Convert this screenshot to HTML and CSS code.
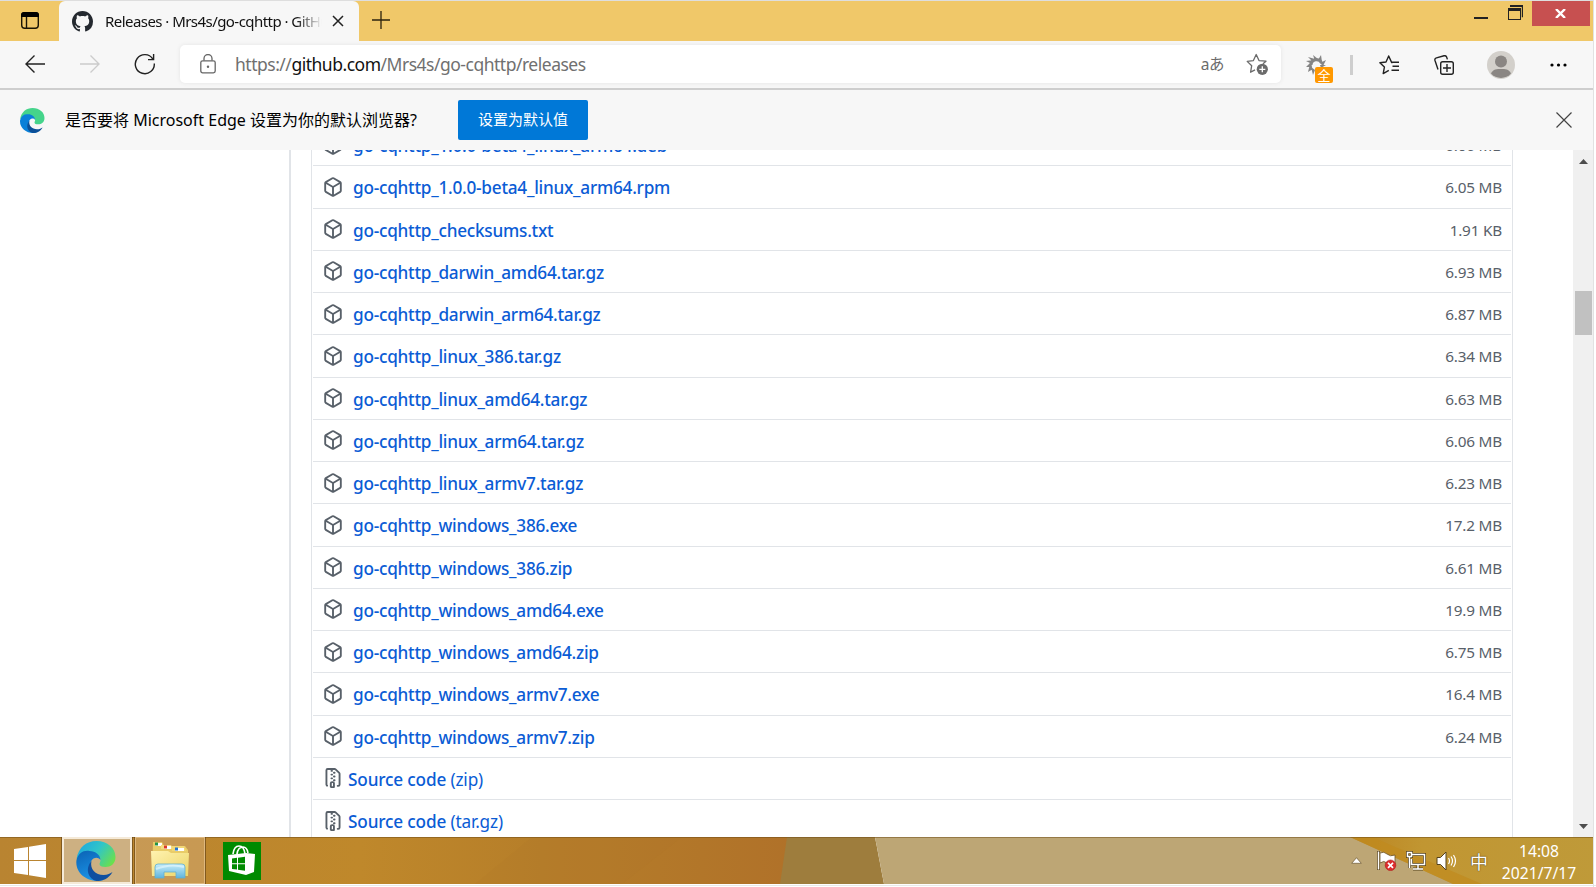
FILE: index.html
```html
<!DOCTYPE html>
<html lang="zh-CN">
<head>
<meta charset="utf-8">
<title>Releases · Mrs4s/go-cqhttp · GitHub</title>
<link rel="stylesheet" href="styles.css">
</head>
<body>
<svg class="defs" aria-hidden="true">
  <symbol id="package" viewBox="0 0 16 16"><path fill-rule="evenodd" d="M8.878.392a1.75 1.75 0 00-1.756 0l-5.25 3.045A1.75 1.75 0 001 4.951v6.098c0 .624.332 1.2.872 1.514l5.25 3.045a1.75 1.75 0 001.756 0l5.25-3.045c.54-.313.872-.89.872-1.514V4.951c0-.624-.332-1.2-.872-1.514L8.878.392zM7.875 1.69a.25.25 0 01.25 0l4.63 2.685L8 7.133 3.245 4.375l4.63-2.685zM2.5 5.677v5.372c0 .09.047.171.125.216l4.625 2.683V8.432L2.5 5.677zm6.25 8.271l4.625-2.683a.25.25 0 00.125-.216V5.677L8.75 8.432v5.516z"/></symbol>
  <symbol id="zip" viewBox="0 0 16 16"><path fill-rule="evenodd" d="M3.5 1.75a.25.25 0 01.25-.25h3a.75.75 0 000 1.5h.5a.75.75 0 000-1.5h2.086a.25.25 0 01.177.073l2.914 2.914a.25.25 0 01.073.177v8.586a.25.25 0 01-.25.25h-.5a.75.75 0 000 1.5h.5A1.75 1.75 0 0014 13.25V4.664c0-.464-.184-.909-.513-1.237L10.573.513A1.75 1.75 0 009.336 0H3.75A1.75 1.75 0 002 1.75v11.5c0 .649.353 1.214.874 1.515a.75.75 0 10.752-1.298.25.25 0 01-.126-.217V1.75zM8.75 3a.75.75 0 000 1.5h.5a.75.75 0 000-1.5h-.5zM6 5.25a.75.75 0 01.75-.75h.5a.75.75 0 010 1.5h-.5A.75.75 0 016 5.25zm2 1.5A.75.75 0 018.75 6h.5a.75.75 0 010 1.5h-.5A.75.75 0 018 6.75zm-1.25.75a.75.75 0 000 1.5h.5a.75.75 0 000-1.5h-.5zM8 9.75A.75.75 0 018.75 9h.5a.75.75 0 010 1.5h-.5A.75.75 0 018 9.75zm-.75.75a1.75 1.75 0 00-1.75 1.75v3c0 .414.336.75.75.75h2.5a.75.75 0 00.75-.75v-3a1.75 1.75 0 00-1.75-1.75h-.5zM7 12.25a.25.25 0 01.25-.25h.5a.25.25 0 01.25.25v2.25H7v-2.25z"/></symbol>
  <linearGradient id="edge-green" x1="0" y1=".2" x2="1" y2=".7"><stop offset="0" stop-color="#1ca8e0"/><stop offset=".5" stop-color="#30c5c8"/><stop offset="1" stop-color="#6be04c"/></linearGradient>
  <linearGradient id="edge-blue" x1="0" y1="0" x2=".4" y2="1"><stop offset="0" stop-color="#0b62b4"/><stop offset="1" stop-color="#1b93e6"/></linearGradient>
  <linearGradient id="paper" x1="0" y1="0" x2="1" y2="1"><stop offset="0" stop-color="#fff3b0"/><stop offset="1" stop-color="#ecd468"/></linearGradient>
  <linearGradient id="tray-blue" x1="0" y1="0" x2="0" y2="1"><stop offset="0" stop-color="#c7edf9"/><stop offset="1" stop-color="#5fb4dd"/></linearGradient>
</svg>
<div class="window">
  <header class="titlebar">
    <div class="tab-actions"><svg width="20" height="20" viewBox="0 0 20 20"><rect x="1.7" y="1.7" width="16.6" height="15.6" rx="3" fill="none" stroke="#1a1505" stroke-width="1.4"/><path d="M1 6V4a3 3 0 0 1 3-3h12a3 3 0 0 1 3 3v2z" fill="#000"/><path d="M6.5 6v11.500" stroke="#1a1505" stroke-width="1.4"/></svg></div>
    <div class="tab">
      <svg width="21" height="21" viewBox="0 0 16 16" fill="#24292f"><path d="M8 0C3.580 0 0 3.580 0 8c0 3.540 2.290 6.530 5.470 7.590.4.070.55-.17.55-.38 0-.19-.01-.82-.01-1.490-2.010.37-2.530-.49-2.690-.94-.09-.23-.48-.94-.82-1.130-.28-.15-.68-.52-.01-.53.63-.01 1.080.58 1.230.82.720 1.210 1.870.87 2.330.66.070-.52.28-.87.51-1.070-1.780-.2-3.640-.89-3.640-3.950 0-.87.31-1.590.82-2.150-.08-.2-.36-1.020.08-2.120 0 0 .67-.21 2.200.82.64-.18 1.320-.27 2-.27s1.360.09 2 .27c1.530-1.040 2.200-.82 2.200-.82.44 1.100.16 1.920.08 2.120.51.56.82 1.270.82 2.150 0 3.070-1.870 3.750-3.650 3.950.29.25.54.73.54 1.480 0 1.070-.01 1.930-.01 2.200 0 .21.15.46.55.38A8.013 8.013 0 0 0 16 8c0-4.420-3.580-8-8-8z"/></svg>
      <span class="tab-title">Releases · Mrs4s/go-cqhttp · GitHub</span>
      <svg class="tab-close" width="12" height="12" viewBox="0 0 12 12"><path d="M1 1l10 10M11 1L1 11" stroke="#222" stroke-width="1.5"/></svg>
    </div>
    <svg class="new-tab" width="18" height="18" viewBox="0 0 18 18"><path d="M9 0v18M0 9h18" stroke="#2b230e" stroke-width="1.3"/></svg>
    <div class="captions">
      <svg class="minimize" width="14" height="2"><path d="M0 1h14" stroke="#222" stroke-width="2"/></svg>
      <svg class="restore" width="15" height="15" viewBox="0 0 15 15"><path d="M2.500 1.300h12v11" fill="none" stroke="#222" stroke-width="1.400"/><path d="M2 1h13" stroke="#222" stroke-width="2"/><rect x=".5" y="4" width="12" height="10.500" fill="none" stroke="#222"/><path d="M0 4.500h13" stroke="#222" stroke-width="3"/></svg>
      <div class="close"><svg width="11" height="9" viewBox="0 0 11 9"><path d="M1 0l9 9M10 0L1 9" stroke="#fff" stroke-width="2.400"/></svg></div>
    </div>
  </header>
  <nav class="toolbar">
    <svg class="back" width="20" height="18" viewBox="0 0 20 18"><path d="M20 9H1M9.500 .5L1 9l8.500 8.500" fill="none" stroke="#222" stroke-width="1.400"/></svg>
    <svg class="forward" width="20" height="18" viewBox="0 0 20 18"><path d="M0 9h19M10.500 .5L19 9l-8.500 8.500" fill="none" stroke="#ccc" stroke-width="1.400"/></svg>
    <svg class="reload" width="22" height="22" viewBox="0 0 22 22"><path d="M20.300 10.500A9.500 9.500 0 1 1 18.800 6M19.600 1v5.600H14" fill="none" stroke="#222" stroke-width="1.400"/></svg>
    <div class="address">
      <svg class="lock" width="16" height="20" viewBox="0 0 16 20"><rect x=".8" y="6.800" width="14.400" height="12" rx="1.800" fill="none" stroke="#666" stroke-width="1.300"/><path d="M4 6.500V4.500a4 4 0 0 1 8 0v2" fill="none" stroke="#666" stroke-width="1.300"/><circle cx="8" cy="12.700" r="1.200" fill="#666"/></svg>
      <span class="url">https://<b>github.com</b>/Mrs4s/go-cqhttp/releases</span>
      <span class="translate">aあ</span>
      <svg class="star" width="23" height="23" viewBox="0 0 23 23"><path d="M9 16.900l-4.400 2.300 1.100-6.500L1.200 8.400l6.200-.8L10.200 1.500 13 7.600l7 .6-3 2.600" fill="none" stroke="#6b6b6b" stroke-width="1.300" stroke-linejoin="round"/><circle cx="16.300" cy="16.300" r="5.600" fill="#6b6b6b"/><path d="M16.300 13.300v6M13.300 16.300h6" stroke="#fff" stroke-width="1.300"/></svg>
    </div>
    <div class="extension"><svg width="20" height="20" viewBox="0 0 20 20"><g fill="#858585"><path d="M9 6L7 0l5 4zM12 5l3-5 1 7zM14 8l6-3-3 6zM14 10l6 0-5 3zM7 7L2 2l7 2zM6 9L0 6l8-1zM6 12l-6 0 5-5zM7 14l-5 3 2-8zM9 15l-2 5-2-8z"/></g><path d="M5 10a5.500 5.500 0 0 1 10.500-2" fill="none" stroke="#858585" stroke-width="3"/></svg><span class="badge">全</span></div>
    <i class="divider"></i>
    <svg class="favorites" width="21" height="20" viewBox="0 0 21 20"><path d="M13.500 7.600H12.700L9.700 1 7 7 .9 7.800l4.500 4.300-1.200 6.500 5.600-3.200M12.500 7.200H20M13.500 11.200H20M12.500 15.200H20" fill="none" stroke="#222" stroke-width="1.400" stroke-linejoin="round"/></svg>
    <svg class="collections" width="20" height="20" viewBox="0 0 20 20"><rect x="6.700" y="6.700" width="12.600" height="12.600" rx="2" fill="none" stroke="#222" stroke-width="1.400"/><path d="M13 9v8M9 13h8M4 14.500L1 5.500Q.4 3.500 2.500 2.900L10 .8Q12 .3 12.600 2l.8 2.400" fill="none" stroke="#222" stroke-width="1.400"/></svg>
    <svg class="avatar" width="28" height="28" viewBox="0 0 28 28"><circle cx="14" cy="14" r="14" fill="#d3d0cb"/><circle cx="14" cy="10.500" r="6" fill="#8a8683"/><path d="M4 22.500c2-4.500 6-4.500 10-4.500s8 0 10 4.500a13.500 13.500 0 0 1-20 0z" fill="#8a8683"/></svg>
    <svg class="more" width="17" height="4" viewBox="0 0 17 4"><circle cx="2" cy="2" r="1.600"/><circle cx="8.500" cy="2" r="1.600"/><circle cx="15" cy="2" r="1.600"/></svg>
  </nav>
  <aside class="infobar">
    <svg class="edge-logo" width="26" height="25" viewBox="0 0 40 40"><path d="M1 18C3 6 11 0 21 0c11 0 19 7 19 16 0 7-5 10-10 10-4 0-6-1-6-3 0-1 1-2 1-4 0-3-3-6-8-6C10 13 4 14 1 18z" fill="#45d48b"/><path d="M1 19C3 12 8 9 14 10c6 0 11 4 11 9-4-5-11-1-10 6 1 6 6 11 13 14C14 43-1 33 1 19z" fill="#0a80d8"/><path d="M16 20c-2 8 4 14 12 14 4 0 7-2 9-3-4 7-10 9-16 9-8-2-12-12-5-20z" fill="#0c4f97"/></svg>
    <span class="question">是否要将 Microsoft Edge 设置为你的默认浏览器?</span>
    <button class="set-default">设置为默认值</button>
    <svg class="dismiss" width="16" height="16" viewBox="0 0 16 16"><path d="M.5 .5l15 15M15.500 .5l-15 15" stroke="#444" stroke-width="1.200"/></svg>
  </aside>
  <main class="page">
    <div class="timeline"></div>
    <ul class="assets">
      <li><svg><use href="#package"/></svg><a>go-cqhttp_1.0.0-beta4_linux_arm64.deb</a><small>6.06 MB</small></li>
      <li><svg><use href="#package"/></svg><a>go-cqhttp_1.0.0-beta4_linux_arm64.rpm</a><small>6.05 MB</small></li>
      <li><svg><use href="#package"/></svg><a>go-cqhttp_checksums.txt</a><small>1.91 KB</small></li>
      <li><svg><use href="#package"/></svg><a>go-cqhttp_darwin_amd64.tar.gz</a><small>6.93 MB</small></li>
      <li><svg><use href="#package"/></svg><a>go-cqhttp_darwin_arm64.tar.gz</a><small>6.87 MB</small></li>
      <li><svg><use href="#package"/></svg><a>go-cqhttp_linux_386.tar.gz</a><small>6.34 MB</small></li>
      <li><svg><use href="#package"/></svg><a>go-cqhttp_linux_amd64.tar.gz</a><small>6.63 MB</small></li>
      <li><svg><use href="#package"/></svg><a>go-cqhttp_linux_arm64.tar.gz</a><small>6.06 MB</small></li>
      <li><svg><use href="#package"/></svg><a>go-cqhttp_linux_armv7.tar.gz</a><small>6.23 MB</small></li>
      <li><svg><use href="#package"/></svg><a>go-cqhttp_windows_386.exe</a><small>17.2 MB</small></li>
      <li><svg><use href="#package"/></svg><a>go-cqhttp_windows_386.zip</a><small>6.61 MB</small></li>
      <li><svg><use href="#package"/></svg><a>go-cqhttp_windows_amd64.exe</a><small>19.9 MB</small></li>
      <li><svg><use href="#package"/></svg><a>go-cqhttp_windows_amd64.zip</a><small>6.75 MB</small></li>
      <li><svg><use href="#package"/></svg><a>go-cqhttp_windows_armv7.exe</a><small>16.4 MB</small></li>
      <li><svg><use href="#package"/></svg><a>go-cqhttp_windows_armv7.zip</a><small>6.24 MB</small></li>
      <li class="source"><svg><use href="#zip"/></svg><a>Source code <span>(zip)</span></a></li>
      <li class="source"><svg><use href="#zip"/></svg><a>Source code <span>(tar.gz)</span></a></li>
    </ul>
    <div class="scrollbar">
      <svg class="up" width="9" height="5" viewBox="0 0 9 5"><path d="M4.500 0L9 5H0z"/></svg>
      <div class="thumb"></div>
      <svg class="down" width="9" height="5" viewBox="0 0 9 5"><path d="M0 0h9L4.500 5z"/></svg>
    </div>
  </main>
  <footer class="taskbar">
    <svg class="wallpaper" width="1593" height="47" viewBox="0 0 1593 47" preserveAspectRatio="none">
      <defs><linearGradient id="wood"><stop offset="0" stop-color="#b98431"/><stop offset=".45" stop-color="#bf882b"/><stop offset=".7" stop-color="#b57d29"/><stop offset="1" stop-color="#b07129"/></linearGradient><linearGradient id="gold"><stop offset="0" stop-color="#bb8420"/><stop offset=".3" stop-color="#c19632"/><stop offset="1" stop-color="#bf9a39"/></linearGradient></defs>
      <rect width="800" height="47" fill="url(#wood)"/>
      <path d="M532 0h150l-60 47H475z" fill="#a97229" opacity=".12"/>
      <path d="M787 0h88l9 47H780z" fill="#9e7d3d"/>
      <path d="M875 0h480l115 47H884z" fill="#bda675"/>
      <path d="M1350 0h243v47h-140z" fill="url(#gold)"/>
      <path d="M1350 0h22l110 47h-29z" fill="#c18a1e" opacity=".7"/>
      <path d="M0 .5h1593" stroke="#6d4b18" stroke-opacity=".5"/>
    </svg>
    <svg class="start" width="34" height="34" viewBox="0 0 34 34"><path d="M1 5l14-2v13H1zM16 2.800L33 0v16H16zM1 17h14v14L1 29zM16 17h17v17l-17-2.800z" fill="#fff"/></svg>
    <div class="task active"><svg width="41" height="40" viewBox="0 0 40 40"><path d="M1 18C3 6 11 0 21 0c11 0 19 7 19 16 0 7-5 10-10 10-4 0-6-1-6-3 0-1 1-2 1-4 0-3-3-6-8-6C10 13 4 14 1 18z" fill="url(#edge-green)"/><path d="M1 19C3 12 8 9 14 10c6 0 11 4 11 9-4-5-11-1-10 6 1 6 6 11 13 14C14 43-1 33 1 19z" fill="url(#edge-blue)"/><path d="M16 20c-2 8 4 14 12 14 4 0 7-2 9-3-4 7-10 9-16 9-8-2-12-12-5-20z" fill="#0f4fa0"/></svg></div>
    <div class="task"><svg width="40" height="39" viewBox="0 0 40 39"><path d="M3 1h9l2 4h21l3 4v26H2z" fill="#e9cc68"/><path d="M5 2h7v3H5z" fill="#fff"/><path d="M5 1.500h3v3H5z" fill="#249245"/><path d="M11 4h10l2 4h-12z" fill="#f4dd82"/><path d="M14 5h7v3h-7z" fill="#fff"/><path d="M14 4.500h3v3h-3z" fill="#dd382a"/><path d="M22 5h12l2 5H22z" fill="#f2d777"/><path d="M25 7h9v3h-9z" fill="#fff"/><path d="M25 6.500h3v3h-3z" fill="#2676cf"/><path d="M1 10h17l3 2h18l-1 23H2z" fill="url(#paper)"/><path d="M8 23h24q3 0 3 3v11h-9v-6H14v6H5V26q0-3 3-3z" fill="url(#tray-blue)" stroke="#5faed1" stroke-width=".8"/><path d="M6 28q15-6 28-2" fill="none" stroke="#e5f9ff" stroke-width="2" opacity=".6"/></svg></div>
    <div class="store"><svg width="28" height="31" viewBox="0 0 28 31"><path d="M5 9Q6 1 11 1t6 8M9 9q1-7 6-7 4 0 5 6" fill="none" stroke="#fff" stroke-width="1.700"/><path d="M0 10l18-2v22L1 26zM18 8l9 1-1 18-8 3z" fill="#fff"/><path d="M4 13.500l5-.7v5.500H4zM10 12.700l7-.9v6.500h-7zM4 19.300h5v5.200l-5-.6zM10 19.300h7v6.500l-7-1z" fill="#008a00"/></svg></div>
    <div class="tray">
      <svg class="chevron" width="11" height="7" viewBox="0 0 11 7"><path d="M5.500 .7L10.300 6.300H.7z" fill="#fff" stroke="#77633f" stroke-width=".8"/></svg>
      <svg class="flag" width="20" height="20" viewBox="0 0 20 20"><path d="M1.500 0v19" stroke="#5a4318" stroke-width="3"/><path d="M3 2q4-2 7 1t8 1v9q-5 2-8-1t-7 0z" fill="#fff" stroke="#6b5226" stroke-width=".8"/><path d="M1.500 .5v18" stroke="#fff" stroke-width="1.500"/><circle cx="13.500" cy="14.300" r="5.300" fill="#dc2d2d" stroke="#b01919" stroke-width=".6"/><path d="M11 11.800l5 5M16 11.800l-5 5" stroke="#fff" stroke-width="1.700"/></svg>
      <svg class="network" width="20" height="20" viewBox="0 0 20 20"><g fill="none" stroke="#55421d" stroke-width="3"><path d="M6 3.500h12.500v10H5.500V8M12 14v4M7 18h10M1.500 1.500h4v4h-4zM3.500 6v11"/></g><g fill="none" stroke="#fff" stroke-width="1.500"><path d="M6 3.500h12.500v10H5.500V8M12 14v4M7 18h10M1.500 1.500h4v4h-4zM3.500 6v11"/></g></svg>
      <svg class="volume" width="21" height="20" viewBox="0 0 21 20"><path d="M1 6.500h3.500L10 1v18l-5.500-5.500H1z" fill="#fff" stroke="#55421d"/><path d="M12.500 7q2 3 0 6M15 5.500q3 4.500 0 9M17.500 4q4 6 0 12" fill="none" stroke="#fff" stroke-width="1.200"/></svg>
      <span class="ime">中</span>
      <div class="clock"><span>14:08</span><span>2021/7/17</span></div>
    </div>
  </footer>
</div>
</body>
</html>
```
FILE: styles.css
```css
* { box-sizing: border-box; }
html, body { margin: 0; height: 100%; overflow: hidden; }
body {
  padding: 0 3px 3px 0;
  background: linear-gradient(#e2e2e2, #e2e2e2) 1593px 0 / 1px 100% no-repeat, linear-gradient(#e9e9e9, #e9e9e9) 0 885px / 100% 1px no-repeat, #fff;
  font-family: "Noto Sans", "Noto Sans CJK SC", sans-serif;
}
svg { display: block; flex: none; }
.defs { position: absolute; width: 0; height: 0; }
.window { width: 1593px; height: 884px; display: flex; flex-direction: column; border-top: 1px solid #dedede; }

.titlebar { height: 40px; flex: none; display: flex; background: #f0c869; }
.tab-actions { width: 59px; padding: 10px 0 0 20px; background: #f0c869; border-bottom-right-radius: 5px; }
.tab { width: 300px; display: flex; align-items: center; padding-left: 14px; background: #f7f7f7; border-radius: 6px 6px 0 0; box-shadow: 0 6px 0 #f7f7f7; }
.tab svg:first-child { margin-left: -1px; }
.tab-title { width: 217px; margin: -1px 0 0 12px; overflow: hidden; white-space: nowrap; font-size: 15px; letter-spacing: -.55px; color: #111; -webkit-mask-image: linear-gradient(90deg, #000 88%, transparent 100%); mask-image: linear-gradient(90deg, #000 88%, transparent 100%); }
.tab-close { margin-left: 10px; }
.new-tab { margin: 10px 0 0 13px; }
.captions { margin-left: auto; display: flex; align-items: flex-start; }
.minimize { margin-top: 16px; }
.restore { margin: 4px 9px 0 20px; }
.close { width: 58px; height: 25px; margin-right: 3px; padding-right: 2px; display: grid; place-items: center; background: #c75050; }

.toolbar { height: 49px; flex: none; display: flex; align-items: center; padding: 0 0 1px 25px; background: #f7f7f7; border-bottom: 2px solid #cecece; }
.forward { margin-left: 35px; }
.reload { margin-left: 34px; }
.address { width: 1101px; height: 38px; margin-left: 24px; padding-left: 20px; display: flex; align-items: center; background: #fff; border-radius: 5px; box-shadow: 0 0 4px #e4e4e4; }
.url { margin-left: 19px; font-size: 17.5px; letter-spacing: -.49px; color: #707070; white-space: nowrap; }
.url b { font-weight: 400; color: #111; }
.translate { margin: -2px 0 0 auto; font-size: 15.5px; letter-spacing: -.5px; color: #6b6b6b; white-space: nowrap; }
.star { margin: 1px 12px 0 22px; }
.extension { position: relative; margin: 1px 0 0 25px; }
.badge { position: absolute; left: 9px; top: 12px; width: 18px; height: 16px; border-radius: 2px; background: #ff9800; color: #fff; font: 13px/15px "Noto Sans CJK SC", sans-serif; text-align: center; }
.divider { width: 3px; height: 20px; margin: 1px 0 0 24px; background: #cecece; }
.favorites { margin: 1px 0 0 26px; }
.collections { margin: 1px 0 0 34px; }
.avatar { margin: 1px 0 0 33px; }
.more { margin: 1px 0 0 35px; }

.infobar { height: 60px; flex: none; display: flex; align-items: center; padding-left: 19px; background: #f7f7f7; }
.question { width: 393px; margin: -3px 0 0 20px; font-size: 16px; color: #000; white-space: nowrap; }
.set-default { width: 130px; height: 40px; padding: 0 0 3px; border: 0; border-radius: 2px; background: #0078d7; color: #fff; font: 15px "Noto Sans CJK SC", sans-serif; }
.dismiss { margin-left: auto; margin-right: 21px; }

.page { height: 687px; flex: none; display: flex; overflow: hidden; background: #fff; }
.timeline { width: 291px; border-right: 2px solid #e1e4e8; }
.assets { width: 1202px; height: 760px; margin: -26px 0 0 20px; padding: 0 1px; list-style: none; border: 1px solid #e1e4e8; border-width: 0 1px; }
.assets li { height: 42.250px; display: flex; align-items: center; padding: 0 9px 0 10px; border-bottom: 1px solid #e1e4e8; }
.assets svg { width: 20px; height: 20px; fill: #586069; }
.assets a { margin: 2px 0 0 10px; font-size: 17.200px; font-weight: 500; letter-spacing: -.24px; color: #0b5cd5; white-space: nowrap; }
.assets small { margin: 1px 0 0 auto; font-size: 15.3px; letter-spacing: -.2px; color: #586069; }
.assets .source a { margin-left: 5px; letter-spacing: -.16px; }
.source span { font-weight: 400; }
.scrollbar { width: 20px; margin-left: auto; padding: 9px 1px 8px 2px; display: flex; flex-direction: column; background: #f0f0f0; fill: #4d4d4d; }
.up, .down { align-self: center; }
.thumb { height: 44px; margin-top: 127px; background: #c1c1c1; }
.down { margin-top: auto; }

.taskbar { position: relative; z-index: 0; height: 47px; flex: none; display: flex; align-items: center; overflow: hidden; }
.wallpaper { position: absolute; inset: 0; z-index: -1; }
.start { margin-left: 13px; }
.task { width: 70px; height: 47px; margin-left: 3px; padding-right: 1px; display: grid; place-items: center; border: 1px solid #deb880; background: rgba(210, 170, 115, .55); box-shadow: 0 0 0 1px rgba(90, 60, 20, .6); }
.task.active { margin-left: 15px; padding-right: 3px; border: 2px solid #f5ead8; background: #cdb082; }
.store { width: 38px; height: 38px; margin-left: 18px; display: grid; place-items: center; background: #008a00; }
.tray { margin-left: auto; display: flex; align-items: center; color: #fff; }
.flag { margin: 1px 0 0 15px; }
.network { margin: 1px 0 0 9px; }
.volume { margin: 1px 0 0 10px; }
.ime { margin-left: 13px; font: 18px "Noto Sans CJK SC", sans-serif; text-shadow: 0 0 1px #4d3810, 0 0 1px #4d3810; }
.clock { width: 76px; margin: 2px 16px 0 13px; display: flex; flex-direction: column; align-items: center; font-size: 15.700px; line-height: 22px; white-space: nowrap; }
```
